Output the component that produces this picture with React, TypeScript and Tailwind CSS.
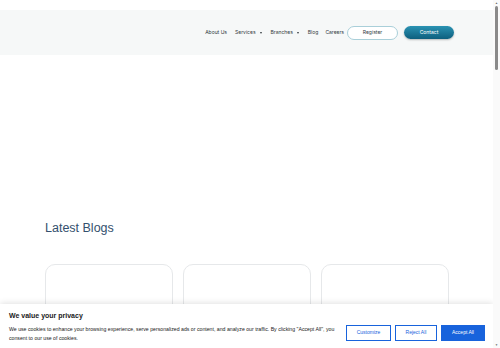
import React from "react";

const Caret = () => (
  <span className="ml-[4px] inline-block h-0 w-0 border-x-[1.5px] border-t-[2px] border-x-transparent border-t-[#333a3f]" />
);

export default function App() {
  return (
    <div className="flex h-[348px] w-[500px] overflow-hidden bg-white" style={{ fontFamily: '"Liberation Sans", Arial, sans-serif' }}>
      <div className="relative h-[348px] w-[493px] overflow-hidden">
        <div className="h-[10px]" />
        <header className="flex h-[45px] items-center justify-end bg-[#f6f8f8] pr-[39px]" style={{ fontFamily: 'Inter, "Liberation Sans", sans-serif' }}>
          <nav className="flex items-center text-[5px] text-[#333a3f]">
            <span className="mr-[8px]">About Us</span>
            <span className="mr-[9px] flex items-center">Services<Caret /></span>
            <span className="mr-[9px] flex items-center">Branches<Caret /></span>
            <span className="mr-[7px]">Blog</span>
            <span className="mr-[3px]">Careers</span>
            <span className="flex h-[14px] w-[51px] items-center justify-center rounded-full border border-[#a9cfd9] bg-white text-[#333a3f]">Register</span>
            <span className="ml-[6px] flex h-[13px] w-[50px] items-center justify-center rounded-full bg-gradient-to-b from-[#2a93b3] to-[#0d5f7e] text-white shadow-[0_1px_2px_rgba(0,0,0,0.25)]">Contact</span>
          </nav>
        </header>
        <main className="pl-[45px]">
          <h2 className="mt-[165px] text-[12.5px] leading-[16px] text-[#34506e]">Latest Blogs</h2>
          <div className="mt-[28px] flex gap-[10px]">
            <div className="h-[120px] w-[128px] rounded-[10px] border border-[#e6e8ea]" />
            <div className="h-[120px] w-[128px] rounded-[10px] border border-[#e6e8ea]" />
            <div className="h-[120px] w-[128px] rounded-[10px] border border-[#e6e8ea]" />
          </div>
        </main>
        <div className="absolute bottom-0 left-0 flex h-[44px] w-[493px] items-center bg-white pl-[9px] pr-[8px] shadow-[0_-1px_6px_rgba(0,0,0,0.12)]">
          <div className="flex-1">
            <div className="mt-[1px] text-[7px] font-bold leading-[9px] text-[#212121]">We value your privacy</div>
            <p className="mt-[5px] w-[332px] text-[5.2px] leading-[9px] text-[#212121]">
              We use cookies to enhance your browsing experience, serve personalized ads or content, and analyze our traffic. By clicking "Accept All", you consent to our use of cookies.
            </p>
          </div>
          <div className="mt-[13px] flex gap-[4px] text-[5px]">
            <span className="flex h-[16px] w-[45px] items-center justify-center border border-[#1863dc] text-[#1863dc]">Customize</span>
            <span className="flex h-[16px] w-[42px] items-center justify-center border border-[#1863dc] text-[#1863dc]">Reject All</span>
            <span className="flex h-[16px] w-[44px] items-center justify-center border border-[#1863dc] bg-[#1863dc] text-white">Accept All</span>
          </div>
        </div>
      </div>
      <div className="flex h-[348px] w-[7px] flex-col items-center bg-[#fafafa]">
        <span className="mt-[1px] text-[3px] leading-[4px] text-[#666]">▲</span>
        <div className="mt-[1px] h-[64px] w-[3px] rounded-full bg-[#8a8a8a]" />
        <div className="flex-1" />
        <span className="mb-[1px] text-[3px] leading-[4px] text-[#666]">▼</span>
      </div>
    </div>
  );
}
